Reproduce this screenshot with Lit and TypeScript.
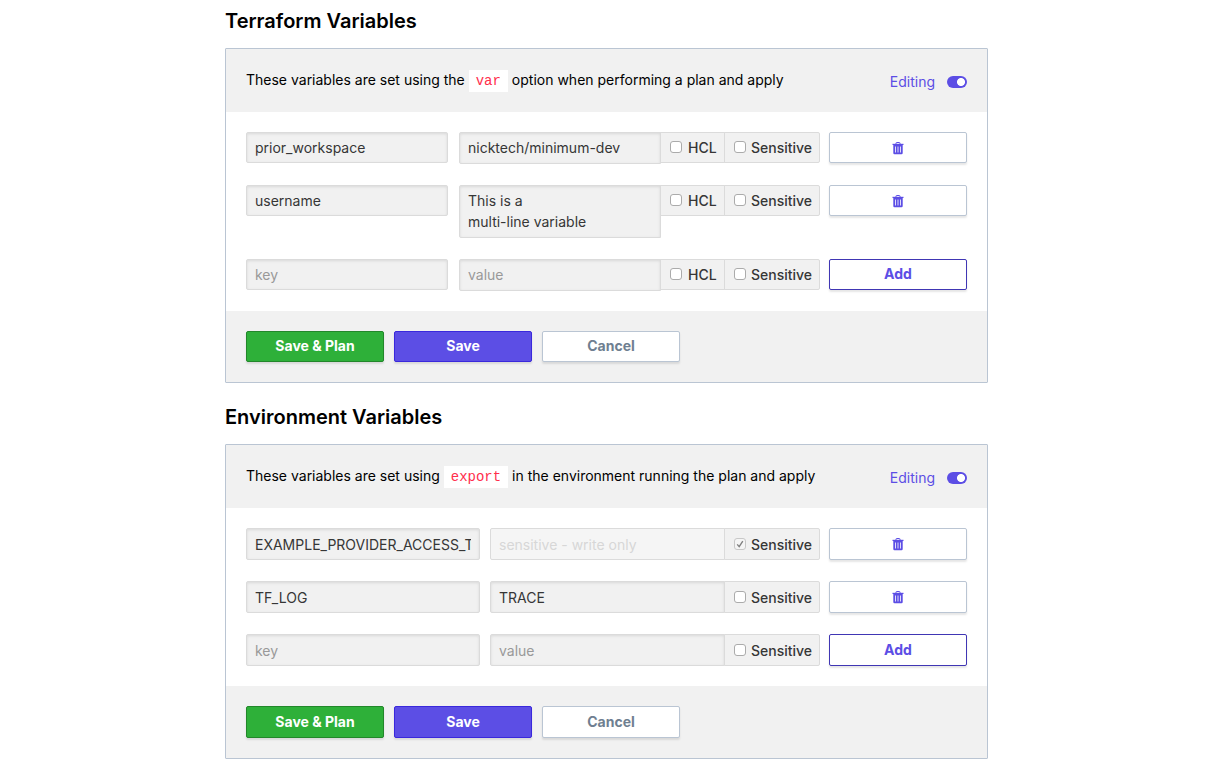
import { LitElement, html, css, svg, nothing } from "lit";
import { customElement, property } from "lit/decorators.js";
import { classMap } from "lit/directives/class-map.js";

interface Variable {
  key: string;
  value: string;
  sensitive?: boolean;
}

const trash = svg`<svg class="trash" viewBox="0 0 12 13" width="12" height="13" aria-hidden="true">
  <path fill="none" stroke="currentColor" stroke-width="1" d="M4 2V1.2Q4 .5 4.7 .5H7.3Q8 .5 8 1.2V2"/>
  <path fill="currentColor" d="M.5 1.8H11.5V3H.5Z"/>
  <path fill="currentColor" fill-rule="evenodd" d="M1.3 3H10.7V11Q10.7 12.2 9.5 12.2H2.5Q1.3 12.2 1.3 11ZM3.2 4.4V10.4H4V4.4ZM5.6 4.4V10.4H6.4V4.4ZM8 4.4V10.4H8.8V4.4Z"/>
</svg>`;

@customElement("variables-card")
export class VariablesCard extends LitElement {
  @property() heading = "";
  @property() before = "";
  @property() code = "";
  @property() after = "";
  @property({ type: Boolean }) hcl = false;
  @property({ attribute: false }) variables: Variable[] = [];

  static styles = css`
    :host {
      display: block;
      --control: 32px;
      --key: 235fr;
      --group: 330fr;
      --key-gap: 1px;
      --value-padding: 5px 8px 4px;
    }
    :host([hcl]) {
      --control: 31px;
      --key: 204fr;
      --group: 361fr;
      --key-gap: 2px;
      --value-padding: 4px 8px 5px;
    }
    * { box-sizing: border-box; }
    h2 {
      margin: 0 0 15px;
      font-size: 20px;
      line-height: 24px;
      font-weight: 600;
      color: #000;
    }
    .card {
      border: 1px solid #bac5d3;
      border-radius: 1px;
      background: #fff;
    }
    .head {
      display: flex;
      align-items: center;
      justify-content: space-between;
      min-height: 63px;
      padding: 0 20px;
      background: #f1f1f1;
      color: #000;
    }
    .head p { margin: 0; line-height: 22px; }
    code {
      display: inline-block;
      padding: 0 7px;
      background: #fff;
      color: #ff2e4c;
      font: 14px/22px "Liberation Mono", monospace;
    }
    .toggle {
      display: flex;
      align-items: center;
      gap: 12px;
      color: #5c4ee5;
      line-height: 20px;
      padding-top: 2px;
    }
    .toggle input {
      appearance: none;
      width: 20px;
      height: 12px;
      margin: 0;
      border-radius: 6px;
      background: radial-gradient(circle at 14px 6px, #fff 3.6px, #5c4ee5 4.4px);
    }
    .rows {
      display: flex;
      flex-direction: column;
      gap: 21px;
      padding: 20px;
    }
    .row {
      display: grid;
      grid-template-columns: minmax(0, var(--key)) minmax(0, var(--group)) 138px;
      column-gap: 9px;
      align-items: start;
    }
    .group { display: flex; align-items: flex-start; min-width: 0; }
    .field {
      display: block;
      height: var(--control);
      padding: 0 8px;
      border: 1px solid #dbdbdb;
      border-radius: 2px;
      background: #f1f1f1;
      box-shadow: inset 0 1px 3px rgba(0, 0, 0, 0.1);
      color: #363636;
      font: inherit;
      outline: none;
      min-width: 0;
    }
    .key { margin-right: var(--key-gap); }
    .value {
      flex: 1;
      height: auto;
      padding: var(--value-padding);
      border-radius: 2px 0 0 2px;
      line-height: 21px;
      resize: none;
      overflow: hidden;
    }
    .field::placeholder { color: #999; opacity: 1; }
    .field:disabled { background: #f5f5f5; box-shadow: none; }
    .field:disabled::placeholder { color: #d7d7d7; }
    .check {
      display: flex;
      flex: none;
      align-items: center;
      gap: 5px;
      width: 96px;
      height: var(--control);
      margin-left: -1px;
      padding: 1px 0 0 9px;
      border: 1px solid #dbdbdb;
      border-radius: 0 2px 2px 0;
      background: #f1f1f1;
      color: #363636;
      font-weight: 500;
      white-space: nowrap;
    }
    .check.hcl { width: 65px; border-radius: 0; gap: 6px; }
    .check input {
      appearance: none;
      flex: none;
      width: 12px;
      height: 12px;
      margin: 0 0 2px;
      border: 1px solid #ababab;
      border-radius: 3px;
      background: #fff;
    }
    .check input:checked {
      border-color: #c8c8c8;
      background: #f5f5f5 url("data:image/svg+xml,%3Csvg xmlns='http://www.w3.org/2000/svg' viewBox='0 0 10 10'%3E%3Cpath d='M2.2 5.4 4.2 7.6 7.8 2.2' fill='none' stroke='%23808080' stroke-width='1.4'/%3E%3C/svg%3E");
    }
    .button {
      display: flex;
      align-items: center;
      justify-content: center;
      width: 138px;
      height: var(--control);
      padding: 0 0 1px;
      border: 1px solid #bac5d3;
      border-radius: 2px;
      background: #fff;
      box-shadow: 0 2px 2px rgba(0, 0, 0, 0.1);
      color: #6f7f91;
      font: inherit;
      font-weight: 700;
    }
    .button.remove, .button.add { color: #5c4ee5; }
    .button.remove { padding: 1px 0 0; }
    .button.add { border-color: #4036b4; }
    .button.plan { border-color: #22872a; background: #2eb039; color: #fff; }
    .button.save { border-color: #3a28dc; background: #5c4ee5; color: #fff; }
    .foot {
      display: flex;
      flex-wrap: wrap;
      gap: 10px;
      padding: 20px;
      background: #f1f1f1;
    }
    .trash { display: block; }
  `;

  private row(v: Variable | null) {
    const locked = !!v?.sensitive;
    return html`<div class="row">
      <input class="field key" type="text" aria-label="Key" placeholder="key" .value=${v?.key ?? ""} />
      <div class="group">
        <textarea
          class="field value"
          aria-label="Value"
          rows=${(v?.value ?? "").split("\n").length}
          placeholder=${locked ? "sensitive - write only" : "value"}
          ?disabled=${locked}
          .value=${v?.value ?? ""}
        ></textarea>
        ${this.hcl ? html`<label class="check hcl"><input type="checkbox" />HCL</label>` : nothing}
        <label class="check"><input type="checkbox" ?checked=${locked} ?disabled=${locked} />Sensitive</label>
      </div>
      <button type="button" class=${classMap({ button: true, remove: !!v, add: !v })} aria-label=${v ? "Delete variable" : nothing}>
        ${v ? trash : "Add"}
      </button>
    </div>`;
  }

  render() {
    return html`<section>
      <h2>${this.heading}</h2>
      <div class="card">
        <div class="head">
          <p>${this.before} <code>${this.code}</code> ${this.after}</p>
          <label class="toggle">Editing<input type="checkbox" role="switch" checked /></label>
        </div>
        <div class="rows">${this.variables.map((v) => this.row(v))}${this.row(null)}</div>
        <div class="foot">
          <button type="button" class="button plan">Save &amp; Plan</button>
          <button type="button" class="button save">Save</button>
          <button type="button" class="button">Cancel</button>
        </div>
      </div>
    </section>`;
  }
}

@customElement("app-root")
export class AppRoot extends LitElement {
  static styles = css`
    :host {
      display: block;
      background: #fff;
      font: 14px/20px Inter, "Liberation Sans", sans-serif;
    }
    main {
      box-sizing: border-box;
      display: flex;
      flex-direction: column;
      gap: 22px;
      max-width: 764px;
      margin: 0 auto;
      padding: 9px 1px 14px 0;
    }
  `;

  private terraform: Variable[] = [
    { key: "prior_workspace", value: "nicktech/minimum-dev" },
    { key: "username", value: "This is a\nmulti-line variable" },
  ];

  private environment: Variable[] = [
    { key: "EXAMPLE_PROVIDER_ACCESS_TOKEN", value: "", sensitive: true },
    { key: "TF_LOG", value: "TRACE" },
  ];

  render() {
    return html`<main>
      <variables-card
        hcl
        heading="Terraform Variables"
        before="These variables are set using the"
        code="var"
        after="option when performing a plan and apply"
        .variables=${this.terraform}
      ></variables-card>
      <variables-card
        heading="Environment Variables"
        before="These variables are set using"
        code="export"
        after="in the environment running the plan and apply"
        .variables=${this.environment}
      ></variables-card>
    </main>`;
  }
}
